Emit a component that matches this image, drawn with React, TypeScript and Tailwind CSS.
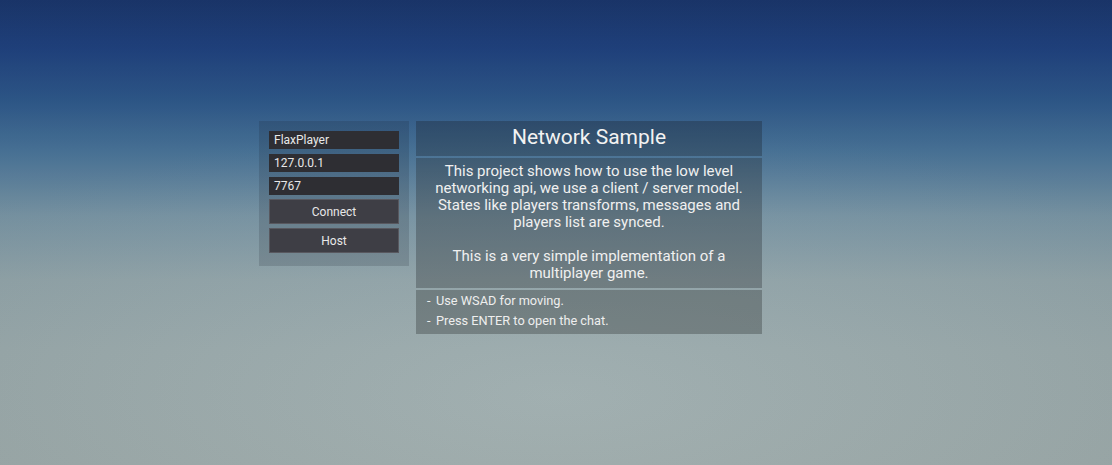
import React from "react";

export default function App() {
  return (
    <div
      className="relative w-full h-[465px] overflow-hidden"
      style={{ fontFamily: "Roboto, 'Liberation Sans', sans-serif" }}
    >
      <div className="absolute inset-0 bg-[linear-gradient(to_bottom,#1b376e_0px,#214482_50px,#2f5a8d_100px,#4a769c_150px,#7b98a8_215px,#93a6ab_280px,#9aaaac_350px,#9dabab_465px)]" />
      <div className="absolute inset-0 bg-[radial-gradient(ellipse_70%_60%_at_50%_85%,rgba(255,255,255,0.06),rgba(0,0,0,0.06))]" />
      <div className="relative flex items-start gap-[7px] pl-[259px] pt-[121px]">
        <div className="flex w-[150px] h-[145px] flex-col bg-[rgba(20,25,35,0.16)] px-[10px] pt-[10px]">
          <div className="flex h-[18px] items-center bg-[#2e2e33] pl-[5px] text-[12px] text-[#e8e8e8]">FlaxPlayer</div>
          <div className="mt-[5px] flex h-[18px] items-center bg-[#2e2e33] pl-[5px] text-[12px] text-[#e8e8e8]">127.0.0.1</div>
          <div className="mt-[5px] flex h-[18px] items-center bg-[#2e2e33] pl-[5px] text-[12px] text-[#e8e8e8]">7767</div>
          <div className="mt-[4px] flex h-[25px] items-center justify-center border border-[#58585f] bg-[#3e3e45] text-[12px] text-[#e8e8e8]">Connect</div>
          <div className="mt-[4px] flex h-[25px] items-center justify-center border border-[#58585f] bg-[#3e3e45] text-[12px] text-[#e8e8e8]">Host</div>
        </div>
        <div className="flex w-[346px] flex-col gap-[2px]">
          <div className="flex h-[35px] items-center justify-center bg-[rgba(25,30,40,0.32)] pb-[1px] text-[21px] text-[#f2f2f2]">
            Network Sample
          </div>
          <div className="h-[130px] bg-[rgba(30,32,36,0.3)] pt-[5px] text-center text-[15px] leading-[17px] text-[#f0f0f0]">
            <p>This project shows how to use the low level</p>
            <p>networking api, we use a client / server model.</p>
            <p>States like players transforms, messages and</p>
            <p>players list are synced.</p>
            <p className="h-[17px]"></p>
            <p>This is a very simple implementation of a</p>
            <p>multiplayer game.</p>
          </div>
          <div className="h-[44px] bg-[rgba(30,32,34,0.3)] pl-[11px] pt-[1px] text-[12.75px] leading-[20px] text-[#eeeeee]">
            <div className="flex">
              <span className="w-[9px]">-</span>
              <span>Use WSAD for moving.</span>
            </div>
            <div className="flex">
              <span className="w-[9px]">-</span>
              <span>Press ENTER to open the chat.</span>
            </div>
          </div>
        </div>
      </div>
    </div>
  );
}
